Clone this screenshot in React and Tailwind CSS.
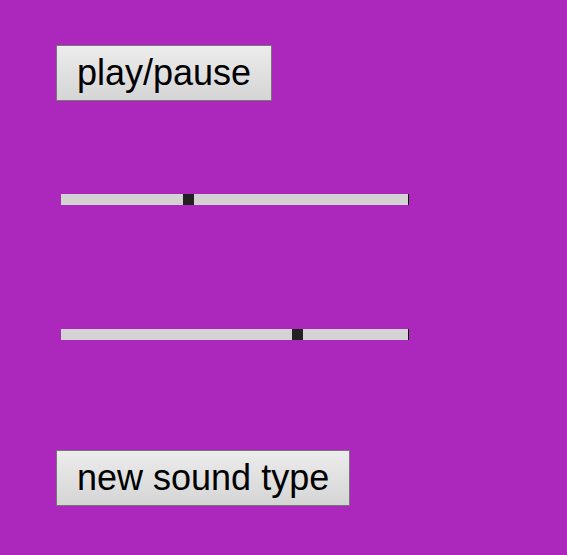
const Slider = ({ thumb }) => (
  <div className="relative w-[348px] h-[11px] bg-[#d3d3d3] border-r border-black">
    <div
      className="absolute top-0 h-[11px] w-[11px] bg-[#222222]"
      style={{ left: thumb }}
    />
  </div>
);

export default function App() {
  return (
    <div className="min-h-[555px] bg-[#ac27bb] pl-[56px] pt-[45px] font-['Liberation_Sans',Arial,sans-serif]">
      <button className="h-[56px] px-[20px] border border-[#767676] bg-gradient-to-b from-[#ececec] to-[#d5d5d5] text-[36px] leading-none text-black">
        play/pause
      </button>
      <div className="mt-[93px] ml-[5px]">
        <Slider thumb={122} />
      </div>
      <div className="mt-[124px] ml-[5px]">
        <Slider thumb={231} />
      </div>
      <div className="mt-[110px]">
        <button className="h-[56px] px-[20px] border border-[#767676] bg-gradient-to-b from-[#ececec] to-[#d5d5d5] text-[36px] leading-none text-black">
          new sound type
        </button>
      </div>
    </div>
  );
}
